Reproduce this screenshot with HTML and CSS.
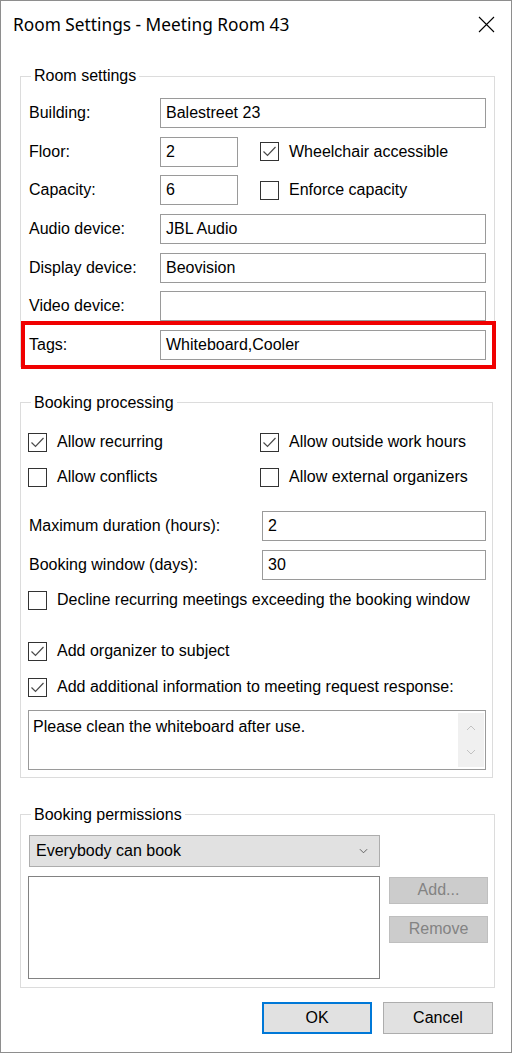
FILE: index.html
```html
<!DOCTYPE html>
<html lang="en">
<head>
<meta charset="utf-8">
<title>Room Settings - Meeting Room 43</title>
<link rel="stylesheet" href="styles.css">
</head>
<body>
<div class="window">
  <div class="titlebar">
    <span class="title">Room Settings - Meeting Room 43</span>
    <svg class="close" viewBox="0 0 17 17" aria-label="Close"><path d="M1 1 L16 16 M16 1 L1 16" stroke="#000" stroke-width="1.1" fill="none"/></svg>
  </div>
  <div class="content">
    <fieldset class="group g1">
      <legend>Room settings</legend>
      <div class="g1-body">
        <div class="row"><span class="lbl">Building:</span><div class="textbox">Balestreet 23</div></div>
        <div class="row"><span class="lbl">Floor:</span>
          <div class="pair"><div class="textbox short">2</div>
            <span class="check"><span class="box checked"><svg viewBox="0 0 19 19"><path d="M3.5 9.5 L7.5 13.5 L15.5 5" stroke="#4a4a4a" stroke-width="1.2" fill="none"/></svg></span>Wheelchair accessible</span></div></div>
        <div class="row"><span class="lbl">Capacity:</span>
          <div class="pair"><div class="textbox short">6</div>
            <span class="check"><span class="box"></span>Enforce capacity</span></div></div>
        <div class="row"><span class="lbl">Audio device:</span><div class="textbox">JBL Audio</div></div>
        <div class="row"><span class="lbl">Display device:</span><div class="textbox">Beovision</div></div>
        <div class="row"><span class="lbl">Video device:</span><div class="textbox"></div></div>
        <div class="row highlight"><span class="lbl">Tags:</span><div class="textbox">Whiteboard,Cooler</div></div>
      </div>
    </fieldset>

    <fieldset class="group g2">
      <legend>Booking processing</legend>
      <div class="g2-body">
        <div class="checkgrid">
          <span class="check"><span class="box"><svg viewBox="0 0 19 19"><path d="M3.5 9.5 L7.5 13.5 L15.5 5" stroke="#4a4a4a" stroke-width="1.2" fill="none"/></svg></span>Allow recurring</span>
          <span class="check"><span class="box"><svg viewBox="0 0 19 19"><path d="M3.5 9.5 L7.5 13.5 L15.5 5" stroke="#4a4a4a" stroke-width="1.2" fill="none"/></svg></span>Allow outside work hours</span>
          <span class="check"><span class="box"></span>Allow conflicts</span>
          <span class="check"><span class="box"></span>Allow external organizers</span>
        </div>
        <div class="fields">
          <div class="frow"><span class="lbl">Maximum duration (hours):</span><div class="textbox">2</div></div>
          <div class="frow"><span class="lbl">Booking window (days):</span><div class="textbox">30</div></div>
        </div>
        <span class="check decline"><span class="box"></span>Decline recurring meetings exceeding the booking window</span>
        <span class="check organizer"><span class="box"><svg viewBox="0 0 19 19"><path d="M3.5 9.5 L7.5 13.5 L15.5 5" stroke="#4a4a4a" stroke-width="1.2" fill="none"/></svg></span>Add organizer to subject</span>
        <span class="check additional"><span class="box"><svg viewBox="0 0 19 19"><path d="M3.5 9.5 L7.5 13.5 L15.5 5" stroke="#4a4a4a" stroke-width="1.2" fill="none"/></svg></span>Add additional information to meeting request response:</span>
        <div class="textarea">
          <span class="ta-text">Please clean the whiteboard after use.</span>
          <div class="scrollbar">
            <svg viewBox="0 0 10 6"><path d="M1 5 L5 1 L9 5" stroke="#c2c2c2" stroke-width="1" fill="none"/></svg>
            <svg viewBox="0 0 10 6"><path d="M1 1 L5 5 L9 1" stroke="#c2c2c2" stroke-width="1" fill="none"/></svg>
          </div>
        </div>
      </div>
    </fieldset>

    <fieldset class="group g3">
      <legend>Booking permissions</legend>
      <div class="g3-body">
        <div class="dropdown"><span>Everybody can book</span>
          <svg viewBox="0 0 10 6"><path d="M1 1 L5 5 L9 1" stroke="#555" stroke-width="1" fill="none"/></svg></div>
        <div class="perm-row">
          <div class="listbox"></div>
          <div class="side-buttons">
            <div class="btn disabled">Add...</div>
            <div class="btn disabled">Remove</div>
          </div>
        </div>
      </div>
    </fieldset>

    <div class="actions">
      <div class="btn dlg default">OK</div>
      <div class="btn dlg">Cancel</div>
    </div>
  </div>
</div>
</body>
</html>
```

FILE: styles.css
```css
* { box-sizing: border-box; }
html, body { margin: 0; padding: 0; background: #fff; }
body {
  font-family: "Liberation Sans", Arial, sans-serif;
  font-size: 16px;
  color: #000;
}
.window {
  width: 512px;
  height: 1053px;
  border: 1px solid #8e8e8e;
  background: #fff;
  display: flex;
  flex-direction: column;
}
.titlebar {
  height: 46px;
  display: flex;
  align-items: center;
  justify-content: space-between;
  padding: 0 16px 0 12px;
}
.title {
  font-family: "Noto Sans", "Open Sans", sans-serif;
  font-size: 17.3px;
}
.close { width: 17px; height: 17px; display: block; }

.content {
  padding: 20px 16px 0 19px;
  display: flex;
  flex-direction: column;
}

.group {
  margin: 0;
  padding: 0;
  min-width: 0;
  border: 1px solid #dcdcdc;
}
.group legend {
  margin-left: 10px;
  padding: 0 3px;
  line-height: 18px;
  font-size: 16px;
}

/* Room settings */
.g1-body {
  padding: 13px 8px 6px 8px;
  display: flex;
  flex-direction: column;
  gap: 8.67px;
}
.row {
  display: grid;
  grid-template-columns: 131px 1fr;
  align-items: center;
  height: 30px;
}
.row.highlight { position: relative; }
.row.highlight::after {
  content: "";
  position: absolute;
  left: -8px;
  right: -10px;
  top: -9px;
  bottom: -9px;
  border: 4px solid #f00000;
  pointer-events: none;
}
.lbl { white-space: nowrap; }
.textbox {
  height: 30px;
  border: 1px solid #9a9a9a;
  background: #fff;
  padding: 0 5px;
  display: flex;
  align-items: center;
  white-space: nowrap;
}
.textbox.short { width: 78px; }
.pair { display: flex; align-items: center; gap: 22px; }

.check {
  display: flex;
  align-items: center;
  height: 19px;
  white-space: nowrap;
}
.box {
  width: 19px;
  height: 19px;
  border: 1px solid #333;
  background: #fff;
  margin-right: 10px;
  flex: none;
  position: relative;
}
.box svg { position: absolute; left: -1px; top: -1px; width: 19px; height: 19px; }

/* Booking processing */
.g2 { margin-top: 27px; margin-right: 2px; }
.g2-body {
  padding: 21px 6px 7px 7px;
  display: flex;
  flex-direction: column;
}
.checkgrid {
  display: grid;
  grid-template-columns: 232px 1fr;
  row-gap: 16px;
}
.fields {
  margin-top: 24px;
  display: flex;
  flex-direction: column;
  gap: 9px;
}
.frow {
  display: grid;
  grid-template-columns: 234px 1fr;
  align-items: center;
  height: 30px;
}
.frow .lbl { padding-left: 1px; }
.decline { margin-top: 11px; }
.organizer { margin-top: 32px; }
.additional { margin-top: 17px; }
.textarea {
  margin-top: 13px;
  height: 60px;
  border: 1px solid #9a9a9a;
  display: flex;
  justify-content: space-between;
  padding: 2px 1px 2px 4px;
}
.ta-text { padding-top: 5px; }
.scrollbar {
  width: 26px;
  background: #f0f0f0;
  display: flex;
  flex-direction: column;
  align-items: center;
  justify-content: space-between;
  padding: 12px 0 12px;
}
.scrollbar svg { width: 10px; height: 6px; display: block; }

/* Booking permissions */
.g3 { margin-top: 28px; }
.g3-body {
  padding: 11px 6px 8px 7px;
  display: flex;
  flex-direction: column;
}
.dropdown {
  margin-left: 1px;
  width: 351px;
  height: 32px;
  background: #e1e1e1;
  border: 1px solid #adadad;
  display: flex;
  align-items: center;
  justify-content: space-between;
  padding: 0 11px 0 6px;
}
.dropdown svg { width: 9px; height: 6px; display: block; }
.perm-row {
  margin-top: 9px;
  display: flex;
  gap: 9px;
  align-items: flex-start;
}
.listbox {
  width: 352px;
  height: 103px;
  border: 1px solid #828282;
  background: #fff;
}
.side-buttons {
  margin-top: 1px;
  display: flex;
  flex-direction: column;
  gap: 12px;
}
.btn {
  display: flex;
  align-items: center;
  justify-content: center;
  background: #e1e1e1;
  border: 1px solid #adadad;
}
.btn.disabled {
  width: 99px;
  height: 27px;
  background: #cccccc;
  border-color: #bfbfbf;
  color: #838383;
}

.actions {
  margin-top: 14px;
  margin-right: 2px;
  display: flex;
  justify-content: flex-end;
  gap: 11px;
}
.btn.dlg { width: 110px; height: 32px; }
.btn.default { border: 2px solid #0078d7; }
```
